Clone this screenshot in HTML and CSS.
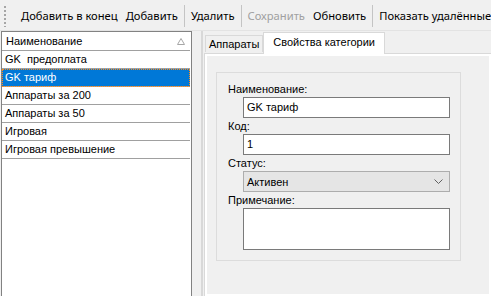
FILE: index.html
```html
<!DOCTYPE html>
<html lang="ru">
<head>
<meta charset="utf-8">
<link rel="stylesheet" href="styles.css">
</head>
<body>
<div class="app">
  <div class="toolbar">
    <div class="grip"></div>
    <span class="tb-btn first">Добавить в конец</span>
    <span class="tb-btn">Добавить</span>
    <span class="tb-sep"></span>
    <span class="tb-btn">Удалить</span>
    <span class="tb-sep"></span>
    <span class="tb-btn disabled">Сохранить</span>
    <span class="tb-btn">Обновить</span>
    <span class="tb-sep"></span>
    <span class="tb-btn">Показать удалённые</span>
  </div>
  <div class="main">
    <div class="list">
      <div class="list-head">
        <span>Наименование</span>
        <svg class="sort" width="8" height="7" viewBox="0 0 8 7"><path d="M4 0.5 L7.5 6.5 L0.5 6.5 Z" fill="none" stroke="#a6a6a6" stroke-width="1"/></svg>
      </div>
      <div class="row">GK&nbsp; предоплата</div>
      <div class="row selected">GK тариф</div>
      <div class="row">Аппараты за 200</div>
      <div class="row">Аппараты за 50</div>
      <div class="row">Игровая</div>
      <div class="row">Игровая превышение</div>
    </div>
    <div class="splitter"></div>
    <div class="tabs">
      <div class="tabstrip">
        <div class="tab">Аппараты</div>
        <div class="tab active">Свойства категории</div>
      </div>
      <div class="tabpage">
        <div class="group">
          <div class="lbl">Наименование:</div>
          <div class="field">GK тариф</div>
          <div class="lbl">Код:</div>
          <div class="field">1</div>
          <div class="lbl">Статус:</div>
          <div class="select">
            <span>Активен</span>
            <svg width="9" height="5" viewBox="0 0 9 5"><path d="M0.5 0.5 L4.5 4.5 L8.5 0.5" fill="none" stroke="#606060" stroke-width="1"/></svg>
          </div>
          <div class="lbl">Примечание:</div>
          <div class="memo"></div>
        </div>
      </div>
    </div>
  </div>
</div>
</body>
</html>
```

FILE: styles.css
```css
html, body {
  margin: 0;
  padding: 0;
}
body {
  width: 491px;
  height: 296px;
  overflow: hidden;
  background: #f0f0f0;
  font-family: "Liberation Sans", Arial, sans-serif;
  font-size: 11px;
  color: #000;
}
.app {
  display: flex;
  flex-direction: column;
  height: 296px;
}
.toolbar {
  height: 31px;
  display: flex;
  align-items: center;
  padding: 1px 0 0 4px;
  white-space: nowrap;
  font-family: "Noto Sans", sans-serif;
  font-size: 11.2px;
  box-sizing: border-box;
  border-bottom: 1px solid #e3e3e3;
  overflow: hidden;
}
.toolbar > * {
  flex-shrink: 0;
}
.grip {
  width: 2px;
  height: 22px;
  background-image: radial-gradient(circle, #a0a0a0 0.7px, transparent 0.8px);
  background-size: 2px 4px;
  margin-right: 11px;
}
.tb-btn {
  padding: 0 4px;
  line-height: 22px;
}
.tb-btn.disabled {
  color: #a0a0a0;
}
.tb-sep {
  width: 1px;
  height: 22px;
  background: #c4c4c4;
  margin: 0 2px;
}
.main {
  flex: 1;
  display: flex;
  min-height: 0;
}
.list {
  margin-left: 1px;
  width: 191px;
  flex-shrink: 0;
  box-sizing: border-box;
  border: 1px solid #828282;
  border-bottom: none;
  background: #fff;
}
.list-head {
  height: 19px;
  display: flex;
  align-items: center;
  justify-content: space-between;
  padding: 0 5px 0 4px;
  border-bottom: 1px solid #a0a0a0;
  box-sizing: border-box;
  margin-right: 1px;
}
.row {
  height: 18px;
  line-height: 17px;
  padding-left: 3px;
  border-bottom: 1px solid #a0a0a0;
  box-sizing: border-box;
  margin-right: 1px;
}
.row.selected {
  background: #0078d7;
  color: #fff;
  outline: 1px dotted #ff8c1a;
  outline-offset: -1px;
}
.splitter {
  width: 2px;
  flex-shrink: 0;
  margin-left: 9px;
  background: #d8d8d8;
}
.tabs {
  flex: 1;
  display: flex;
  flex-direction: column;
  margin-left: 1px;
  min-width: 0;
}
.tabstrip {
  height: 22px;
  display: flex;
  align-items: flex-end;
  padding-left: 1px;
  position: relative;
  z-index: 1;
}
.tab {
  height: 16px;
  line-height: 16px;
  padding: 0 3px;
  border: 1px solid #d9d9d9;
  border-bottom: none;
  background: #f0f0f0;
  margin-bottom: 1px;
  white-space: nowrap;
}
.tab.active {
  height: 21px;
  line-height: 19px;
  background: #fff;
  margin-bottom: -1px;
  padding: 0 9px;
  margin-left: 0;
}
.tabpage {
  flex: 1;
  border: 1px solid #d9d9d9;
  border-right: none;
  border-bottom: none;
  box-shadow: inset 0 0 0 2px #fff;
  padding: 18px 0 0 11px;
  background: #f0f0f0;
}
.group {
  width: 245px;
  height: 189px;
  box-sizing: border-box;
  border: 1px solid #dcdcdc;
  padding: 8px 0 0 11px;
}
.lbl {
  height: 16px;
  line-height: 16px;
}
.field {
  margin-left: 15px;
  width: 207px;
  height: 21px;
  box-sizing: border-box;
  border: 1px solid #7a7a7a;
  background: #fff;
  line-height: 19px;
  padding-left: 3px;
}
.select {
  margin-left: 15px;
  width: 207px;
  height: 21px;
  box-sizing: border-box;
  border: 1px solid #adadad;
  background: #e5e5e5;
  display: flex;
  align-items: center;
  justify-content: space-between;
  padding: 0 6px 0 3px;
}
.memo {
  margin-left: 15px;
  width: 207px;
  height: 42px;
  box-sizing: border-box;
  border: 1px solid #7a7a7a;
  background: #fff;
}
```
